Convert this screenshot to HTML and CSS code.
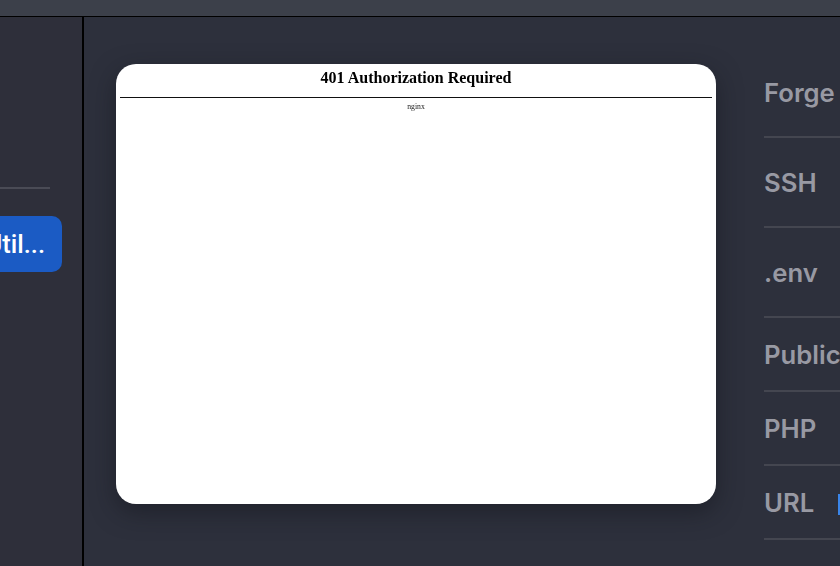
FILE: index.html
```html
<!DOCTYPE html>
<html lang="en">
<head>
<meta charset="utf-8">
<title>Site preview</title>
<link rel="stylesheet" href="styles.css">
</head>
<body>
<div class="titlebar"></div>
<div class="app">
  <aside class="sidebar">
    <div class="side-rule"></div>
    <div class="side-item">Util...</div>
  </aside>
  <main class="content">
    <section class="preview">
      <h1 class="err-title">401 Authorization Required</h1>
      <hr class="err-rule">
      <p class="err-server">nginx</p>
    </section>
    <section class="details">
      <div class="row row-tall row-first">Forge</div>
      <div class="row row-tall">SSH</div>
      <div class="row row-tall">.env</div>
      <div class="row">Public</div>
      <div class="row">PHP</div>
      <div class="row row-url">URL<span class="url-value"></span></div>
    </section>
  </main>
</div>
</body>
</html>
```
FILE: styles.css
```css
* { box-sizing: border-box; }
html, body { margin: 0; height: 100%; overflow: hidden; }
body {
  width: 840px;
  height: 566px;
  display: flex;
  flex-direction: column;
  background: #2d303b;
  font-family: Inter, "Liberation Sans", sans-serif;
}
.titlebar {
  flex: none;
  height: 17px;
  background: #3c404a;
  border-bottom: 1px solid #000;
}
.app { flex: 1; display: flex; min-height: 0; }
.sidebar {
  flex: none;
  width: 84px;
  border-right: 2px solid #000;
  background: #2e2f3a;
  overflow: hidden;
  padding-top: 170px;
  display: flex;
  flex-direction: column;
  align-items: flex-end;
}
.side-rule {
  flex: none;
  width: 50px;
  height: 2px;
  margin-right: 32px;
  background: #4a4b55;
}
.side-item {
  flex: none;
  width: 120px;
  height: 56px;
  margin-top: 27px;
  margin-right: 20px;
  padding-right: 17px;
  background: #1b5bc4;
  border-radius: 10px;
  color: #fff;
  font-family: Roboto, sans-serif;
  font-size: 25.5px;
  font-weight: 500;
  line-height: 56px;
  text-align: right;
}
.content {
  flex: 1;
  min-width: 0;
  display: flex;
  align-items: flex-start;
  overflow: hidden;
  padding: 47px 0 0 32px;
  background: #2d303c;
}
.preview {
  flex: none;
  width: 600px;
  height: 440px;
  padding: 0 4px;
  background: #fff;
  border-radius: 20px;
  box-shadow: 0 8px 24px rgba(20, 22, 30, 0.55);
  color: #000;
  font-family: "Liberation Serif", serif;
  text-align: center;
}
.err-title {
  margin: 0;
  padding-top: 5px;
  font-size: 16px;
  line-height: 18px;
  font-weight: 700;
  filter: blur(0.3px);
}
.err-rule {
  margin: 10px 0 0;
  border: 0;
  height: 1px;
  background: #111;
}
.err-server {
  margin: 5px 0 0;
  font-size: 7.7px;
  line-height: 8px;
  color: #222;
  filter: blur(0.3px);
}
.details {
  flex: none;
  width: 200px;
  margin-left: 48px;
  color: #9899a3;
  font-size: 25.7px;
  font-weight: 600;
}
.row {
  height: 74px;
  line-height: 73px;
  border-bottom: 2px solid #444650;
  white-space: nowrap;
}
.row-tall { height: 90px; line-height: 90px; }
.row-first { height: 74px; line-height: 58px; }
.url-value {
  display: inline-block;
  width: 8px;
  height: 21px;
  margin-left: 23.5px;
  vertical-align: -3px;
  background: #3a85e8;
}
```
